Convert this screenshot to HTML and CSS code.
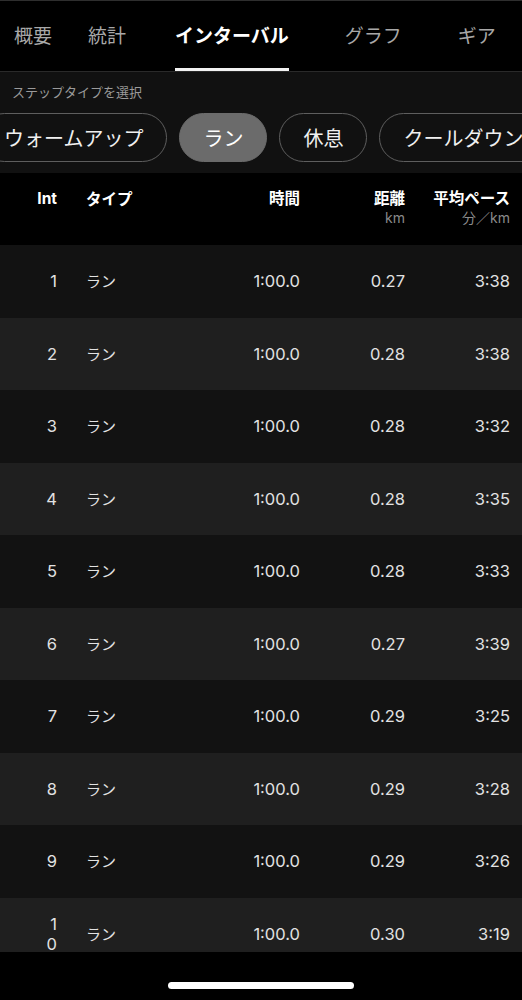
FILE: index.html
```html
<!DOCTYPE html>
<html lang="ja">
<head>
<meta charset="utf-8">
<link rel="stylesheet" href="styles.css">
</head>
<body>
<div class="screen">
  <nav class="tabs">
    <span class="tab t1">概要</span>
    <span class="tab t2">統計</span>
    <span class="tab t3 active">インターバル</span>
    <span class="tab t4">グラフ</span>
    <span class="tab t5">ギア</span>
  </nav>
  <section class="steps">
    <div class="steps-label">ステップタイプを選択</div>
    <div class="chips">
      <span class="chip">ウォームアップ</span>
      <span class="chip selected">ラン</span>
      <span class="chip">休息</span>
      <span class="chip">クールダウン</span>
    </div>
  </section>
  <div class="grid head">
    <div class="c-int">Int</div>
    <div class="c-type">タイプ</div>
    <div class="c-num">時間</div>
    <div class="c-num">距離<span class="unit">km</span></div>
    <div class="c-num">平均ペース<span class="unit">分／km</span></div>
  </div>
  <div class="rows">
    <div class="grid row"><div class="c-int"><span class="n">1</span></div><div class="c-type">ラン</div><div class="c-num">1:00.0</div><div class="c-num">0.27</div><div class="c-num">3:38</div></div>
    <div class="grid row"><div class="c-int"><span class="n">2</span></div><div class="c-type">ラン</div><div class="c-num">1:00.0</div><div class="c-num">0.28</div><div class="c-num">3:38</div></div>
    <div class="grid row"><div class="c-int"><span class="n">3</span></div><div class="c-type">ラン</div><div class="c-num">1:00.0</div><div class="c-num">0.28</div><div class="c-num">3:32</div></div>
    <div class="grid row"><div class="c-int"><span class="n">4</span></div><div class="c-type">ラン</div><div class="c-num">1:00.0</div><div class="c-num">0.28</div><div class="c-num">3:35</div></div>
    <div class="grid row"><div class="c-int"><span class="n">5</span></div><div class="c-type">ラン</div><div class="c-num">1:00.0</div><div class="c-num">0.28</div><div class="c-num">3:33</div></div>
    <div class="grid row"><div class="c-int"><span class="n">6</span></div><div class="c-type">ラン</div><div class="c-num">1:00.0</div><div class="c-num">0.27</div><div class="c-num">3:39</div></div>
    <div class="grid row"><div class="c-int"><span class="n">7</span></div><div class="c-type">ラン</div><div class="c-num">1:00.0</div><div class="c-num">0.29</div><div class="c-num">3:25</div></div>
    <div class="grid row"><div class="c-int"><span class="n">8</span></div><div class="c-type">ラン</div><div class="c-num">1:00.0</div><div class="c-num">0.29</div><div class="c-num">3:28</div></div>
    <div class="grid row"><div class="c-int"><span class="n">9</span></div><div class="c-type">ラン</div><div class="c-num">1:00.0</div><div class="c-num">0.29</div><div class="c-num">3:26</div></div>
    <div class="grid row"><div class="c-int"><span class="n">10</span></div><div class="c-type">ラン</div><div class="c-num">1:00.0</div><div class="c-num">0.30</div><div class="c-num">3:19</div></div>
  </div>
  <footer class="home"><span class="indicator"></span></footer>
</div>
</body>
</html>
```
FILE: styles.css
```css
* { box-sizing: border-box; }
html, body { margin: 0; padding: 0; background: #000; }
body {
  font-family: Inter, "Noto Sans CJK JP", sans-serif;
  color: #e6e6e6;
  width: 522px;
  height: 1000px;
  overflow: hidden;
}
.screen {
  width: 522px;
  height: 1000px;
  display: flex;
  flex-direction: column;
  overflow: hidden;
  background: #000;
}
.tabs {
  height: 72px;
  flex: none;
  display: flex;
  align-items: stretch;
  padding-left: 14px;
  border-top: 1px solid #2e2e2e;
  border-bottom: 1px solid #2a2a2a;
  background: #000;
  font-family: "Noto Sans CJK JP", sans-serif;
}
.tab {
  display: flex;
  align-items: center;
  font-size: 19px;
  color: #a8a8a8;
  white-space: nowrap;
  border-bottom: 3px solid transparent;
  padding-bottom: 1px;
}
.tab.active { color: #fff; font-weight: 700; border-bottom-color: #f2f2f2; }
.t2 { margin-left: 36px; }
.t3 { margin-left: 49px; }
.t4 { margin-left: 56px; }
.t5 { margin-left: 56px; }
.steps {
  flex: none;
  height: 101px;
  background: #111;
  padding-top: 11px;
  overflow: hidden;
}
.steps-label {
  font-family: "Noto Sans CJK JP", sans-serif;
  font-size: 13px;
  line-height: 17px;
  color: #9a9a9a;
  padding-left: 12px;
}
.chips {
  display: flex;
  gap: 12px;
  margin-top: 13px;
  margin-left: -20px;
}
.chip {
  flex: none;
  height: 49px;
  padding: 0 23px;
  border: 1px solid #5e5e5e;
  border-radius: 25px;
  display: flex;
  align-items: center;
  font-family: "Noto Sans CJK JP", sans-serif;
  font-size: 20px;
  color: #f0f0f0;
  white-space: nowrap;
}
.chip.selected { background: #6b6b6b; border-color: #6b6b6b; color: #fff; }
.grid {
  display: grid;
  grid-template-columns: 57px 133px 110px 105px 105px;
  padding-right: 12px;
}
.head {
  flex: none;
  height: 72px;
  background: #000;
  padding-top: 16px;
  font-size: 15.5px;
  line-height: 19px;
  font-weight: 700;
  color: #fff;
  font-family: Inter, "Noto Sans CJK JP", sans-serif;
}
.head .c-int { text-align: right; }
.unit {
  display: block;
  font-weight: 400;
  font-size: 14px;
  color: #8a8a8a;
}
.c-type { padding-left: 29px; font-family: "Noto Sans CJK JP", sans-serif; }
.c-num { text-align: right; }
.rows {
  flex: none;
  height: 707px;
  overflow: hidden;
}
.row {
  height: 72.5px;
  align-items: center;
  font-size: 16.5px;
  line-height: 20px;
  color: #e2e2e2;
  background: #121212;
}
.row:nth-child(even) { background: #1f1f1f; }
.row .c-type { font-size: 15px; }
.row .c-int { text-align: right; }
.n {
  display: inline-block;
  max-width: 14px;
  text-align: right;
  word-break: break-all;
}
.home {
  flex: 1;
  display: flex;
  justify-content: center;
  align-items: flex-start;
  padding-top: 30px;
  background: #000;
}
.indicator {
  width: 186px;
  height: 7px;
  border-radius: 4px;
  background: #fff;
}
```
